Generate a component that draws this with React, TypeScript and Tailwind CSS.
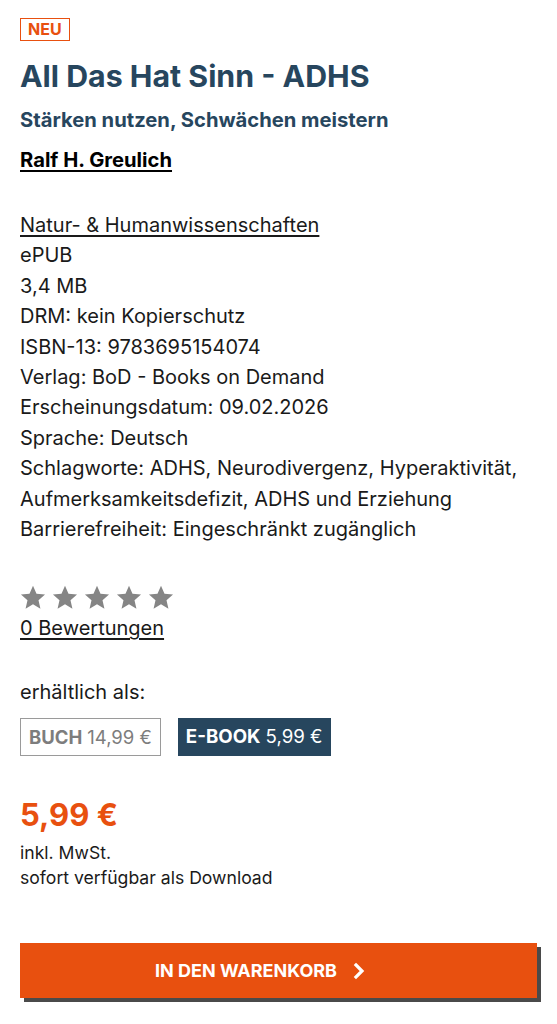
import React from 'react';

const details = [
  'ePUB',
  '3,4 MB',
  'DRM: kein Kopierschutz',
  'ISBN-13: 9783695154074',
  'Verlag: BoD - Books on Demand',
  'Erscheinungsdatum: 09.02.2026',
  'Sprache: Deutsch',
  'Schlagworte: ADHS, Neurodivergenz, Hyperaktivität, Aufmerksamkeitsdefizit, ADHS und Erziehung',
  'Barrierefreiheit: Eingeschränkt zugänglich',
];

const Star = () => (
  <svg width="28" height="27" viewBox="0 0 24 24" fill="#858585">
    <path d="M12 1.5l3.1 7.1 7.6.7-5.8 5.1 1.7 7.5L12 17.9l-6.6 4 1.7-7.5-5.8-5.1 7.6-.7z" />
  </svg>
);

export default function App() {
  return (
    <div className="min-h-screen bg-white px-5 pt-[17px] text-[#1a1a1a]" style={{ fontFamily: 'Inter, "Noto Sans", sans-serif' }}>
      <span className="inline-block border border-[#e8500f] px-[7px] text-[16px] leading-[21px] font-bold text-[#e8500f]">NEU</span>

      <h1 className="mt-[15px] text-[30.3px] leading-[40px] font-bold text-[#27465e]">All Das Hat Sinn - ADHS</h1>
      <h2 className="mt-[10px] text-[20.2px] leading-[28px] font-bold text-[#27465e]">Stärken nutzen, Schwächen meistern</h2>
      <div className="mt-[12px] text-[20.2px] leading-[28px] font-bold text-black underline underline-offset-[3px]">Ralf H. Greulich</div>

      <div className="mt-[36px] text-[20px] leading-[30.4px]">
        <div className="underline underline-offset-[3px]">Natur- &amp; Humanwissenschaften</div>
        {details.map((d) => (
          <div key={d}>{d}</div>
        ))}
      </div>

      <div className="mt-[40px] flex gap-[4px] -ml-[1px]">
        <Star />
        <Star />
        <Star />
        <Star />
        <Star />
      </div>
      <div className="mt-[4px] text-[20px] leading-[26px] underline underline-offset-[3px]">0 Bewertungen</div>

      <div className="mt-[38px] text-[20px] leading-[26px]">erhältlich als:</div>
      <div className="mt-[13px] flex gap-[17px]">
        <div className="flex h-[38px] items-center border border-[#9a9a9a] px-[8px] text-[18.5px] text-[#7d7d7d]">
          <span className="font-bold">BUCH</span>
          <span className="ml-[5px]">14,99 €</span>
        </div>
        <div className="flex h-[38px] items-center bg-[#27465e] px-[8px] text-[18.7px] text-white">
          <span className="font-bold">E-BOOK</span>
          <span className="ml-[5px]">5,99 €</span>
        </div>
      </div>

      <div className="mt-[38px] text-[31px] leading-[42px] font-bold text-[#e8500f]">5,99 €</div>
      <div className="mt-[4px] text-[17.6px] leading-[25px]">
        <div>inkl. MwSt.</div>
        <div>sofort verfügbar als Download</div>
      </div>

      <button className="mt-[53px] flex h-[55px] w-[517px] items-center justify-center gap-[15px] bg-[#e8500f] pr-[36px] text-[18px] font-bold text-white shadow-[4px_4px_0_#4a4a4a]">
        IN DEN WARENKORB
        <svg width="14" height="18" viewBox="0 0 14 18" fill="none" stroke="white" strokeWidth="3.2" strokeLinecap="square">
          <path d="M4 3l6 6-6 6" />
        </svg>
      </button>
    </div>
  );
}
